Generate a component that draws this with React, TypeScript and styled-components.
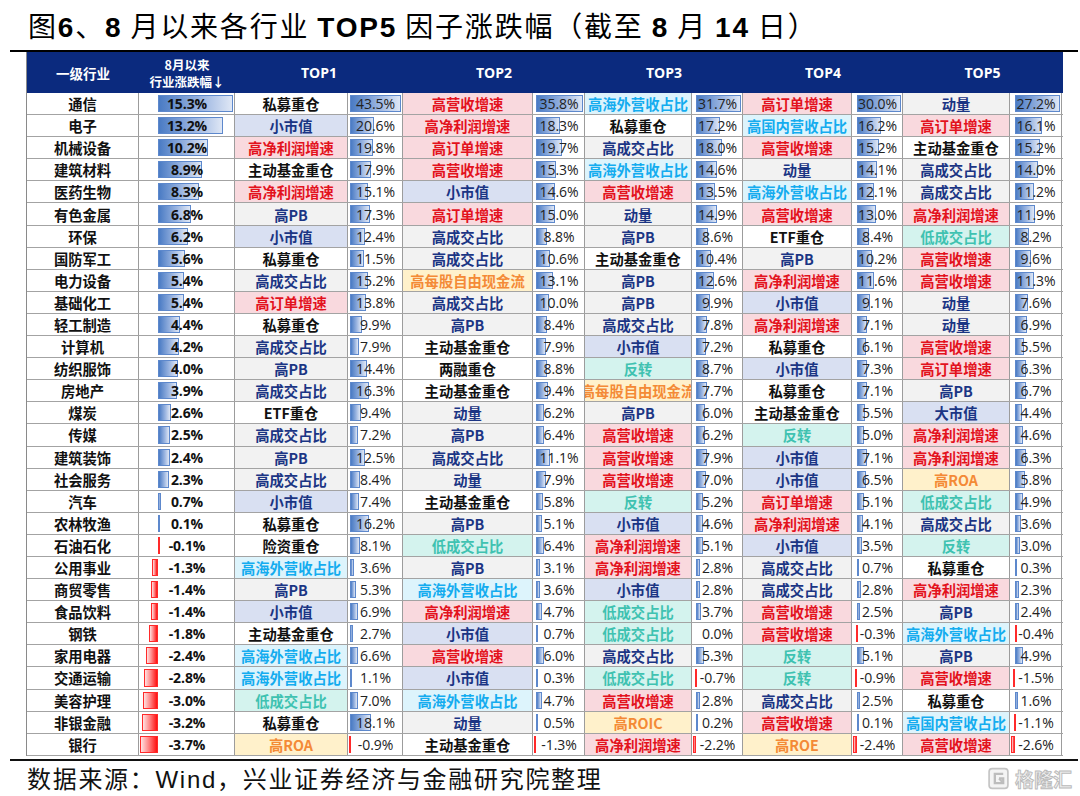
import styled, { createGlobalStyle } from "styled-components";

const GlobalStyle = createGlobalStyle`
  html, body {
    margin: 0;
    padding: 0;
    background: #ffffff;
  }
  body {
    font-family: "Noto Sans CJK SC", "Noto Sans", sans-serif;
    color: #111;
  }
`;

// column widths: industry, change, then name/value x5
const NAME_W = [113, 130, 107, 109, 107];
const VALUE_W = [55, 52, 51, 51, 52];
const COLS = `112px 96px ${NAME_W.map((n, i) => `${n}px ${VALUE_W[i]}px`).join(" ")}`;

const NUM_FONT = `"Open Sans", "Noto Sans", "Noto Sans CJK SC", sans-serif`;
const CJK_FONT = `"Noto Sans CJK SC", "Noto Sans", sans-serif`;

type Tone = "red" | "cyan" | "navy" | "lav" | "plain" | "teal" | "orange";

const TONES: Record<Tone, { fg: string; bg: string }> = {
  red: { fg: "#e3121d", bg: "#f9d9de" },
  cyan: { fg: "#14acef", bg: "#ddf4fc" },
  navy: { fg: "#1b3584", bg: "#f2f2f2" },
  lav: { fg: "#1b3584", bg: "#d9e0f2" },
  plain: { fg: "#111111", bg: "#ffffff" },
  teal: { fg: "#3fc2b1", bg: "#d4f3ee" },
  orange: { fg: "#f48a36", bg: "#fff1cb" },
};

const FACTOR_TONE: Record<string, Tone> = {
  私募重仓: "plain",
  主动基金重仓: "plain",
  ETF重仓: "plain",
  两融重仓: "plain",
  险资重仓: "plain",
  高营收增速: "red",
  高订单增速: "red",
  高净利润增速: "red",
  高海外营收占比: "cyan",
  高国内营收占比: "cyan",
  高成交占比: "navy",
  高PB: "navy",
  动量: "navy",
  小市值: "lav",
  大市值: "lav",
  低成交占比: "teal",
  反转: "teal",
  高每股自由现金流: "orange",
  高ROA: "orange",
  高ROIC: "orange",
  高ROE: "orange",
};

const RAW = `通信|15.3|私募重仓|43.5|高营收增速|35.8|高海外营收占比|31.7|高订单增速|30.0|动量|27.2
电子|13.2|小市值|20.6|高净利润增速|18.3|私募重仓|17.2|高国内营收占比|16.2|高订单增速|16.1
机械设备|10.2|高净利润增速|19.8|高订单增速|19.7|高成交占比|18.0|高营收增速|15.2|主动基金重仓|15.2
建筑材料|8.9|主动基金重仓|17.9|高营收增速|15.3|高海外营收占比|14.6|动量|14.1|高成交占比|14.0
医药生物|8.3|高净利润增速|15.1|小市值|14.6|高营收增速|13.5|高海外营收占比|12.1|高成交占比|11.2
有色金属|6.8|高PB|17.3|高订单增速|15.0|动量|14.9|高营收增速|13.0|高净利润增速|11.9
环保|6.2|小市值|12.4|高成交占比|8.8|高PB|8.6|ETF重仓|8.4|低成交占比|8.2
国防军工|5.6|私募重仓|11.5|高成交占比|10.6|主动基金重仓|10.4|高PB|10.2|高营收增速|9.6
电力设备|5.4|高成交占比|15.2|高每股自由现金流|13.1|高PB|12.6|高净利润增速|11.6|高营收增速|11.3
基础化工|5.4|高订单增速|13.8|高成交占比|10.0|高PB|9.9|小市值|9.1|动量|7.6
轻工制造|4.4|私募重仓|9.9|高PB|8.4|高成交占比|7.8|高净利润增速|7.1|动量|6.9
计算机|4.2|高成交占比|7.9|主动基金重仓|7.9|小市值|7.2|私募重仓|6.1|高营收增速|5.5
纺织服饰|4.0|高PB|14.4|两融重仓|8.8|反转|8.7|小市值|7.3|高订单增速|6.3
房地产|3.9|高成交占比|16.3|主动基金重仓|9.4|高每股自由现金流|7.7|私募重仓|7.1|高PB|6.7
煤炭|2.6|ETF重仓|9.4|动量|6.2|高PB|6.0|主动基金重仓|5.5|大市值|4.4
传媒|2.5|高成交占比|7.2|高PB|6.4|高营收增速|6.2|反转|5.0|高净利润增速|4.6
建筑装饰|2.4|高PB|12.5|高成交占比|11.1|高营收增速|7.9|小市值|7.1|高净利润增速|6.3
社会服务|2.3|高成交占比|8.4|动量|7.9|高营收增速|7.0|小市值|6.5|高ROA|5.8
汽车|0.7|小市值|7.4|主动基金重仓|5.8|反转|5.2|高订单增速|5.1|低成交占比|4.9
农林牧渔|0.1|私募重仓|16.2|高PB|5.1|小市值|4.6|高净利润增速|4.1|高成交占比|3.6
石油石化|-0.1|险资重仓|8.1|低成交占比|6.4|高净利润增速|5.1|小市值|3.5|反转|3.0
公用事业|-1.3|高海外营收占比|3.6|高PB|3.1|高净利润增速|2.8|高成交占比|0.7|私募重仓|0.3
商贸零售|-1.4|高PB|5.3|高海外营收占比|3.6|小市值|2.8|高成交占比|2.8|高净利润增速|2.3
食品饮料|-1.4|小市值|6.9|高净利润增速|4.7|低成交占比|3.7|高营收增速|2.5|高PB|2.4
钢铁|-1.8|主动基金重仓|2.7|小市值|0.7|低成交占比|0.0|高营收增速|-0.3|高海外营收占比|-0.4
家用电器|-2.4|高海外营收占比|6.6|高营收增速|6.0|高成交占比|5.3|反转|5.1|高PB|4.9
交通运输|-2.8|高海外营收占比|1.1|小市值|0.3|低成交占比|-0.7|反转|-0.9|高营收增速|-1.5
美容护理|-3.0|低成交占比|7.0|高海外营收占比|4.7|高营收增速|2.8|高成交占比|2.5|私募重仓|1.6
非银金融|-3.2|私募重仓|18.1|动量|0.5|高ROIC|0.2|高营收增速|0.1|高国内营收占比|-1.1
银行|-3.7|高ROA|-0.9|主动基金重仓|-1.3|高净利润增速|-2.2|高ROE|-2.4|高营收增速|-2.6`;

type Row = {
  industry: string;
  change: number;
  factors: { name: string; value: number }[];
};

const ROWS: Row[] = RAW.split("\n").map((line) => {
  const p = line.split("|");
  const factors = [];
  for (let i = 2; i < p.length; i += 2) {
    factors.push({ name: p[i], value: parseFloat(p[i + 1]) });
  }
  return { industry: p[0], change: parseFloat(p[1]), factors };
});

type Scale = { min: number; range: number; width: number };

const makeScale = (values: number[], cellWidth: number): Scale => {
  const min = Math.min(0, ...values);
  const max = Math.max(0, ...values);
  return { min, range: max - min, width: cellWidth - 3 };
};

const CHANGE_SCALE = makeScale(
  ROWS.map((r) => r.change),
  96
);
const VALUE_SCALES = VALUE_W.map((w, i) =>
  makeScale(
    ROWS.map((r) => r.factors[i].value),
    w
  )
);

const fmt = (v: number) => `${v.toFixed(1)}%`;

const Page = styled.div`
  width: 1068px;
  margin-left: 10px;
`;

const Title = styled.h1`
  margin: 0;
  height: 50px;
  padding-left: 18px;
  border-bottom: 2px solid #000;
  font-family: ${CJK_FONT};
  font-weight: 400;
  font-size: 28px;
  line-height: 50px;
  letter-spacing: 1.8px;
  color: #000;
  white-space: nowrap;
`;

const Latin = styled.b`
  font-family: "Liberation Sans", Arial, sans-serif;
  font-weight: 700;
`;

const Table = styled.div`
  width: 1036px;
  margin-left: 16px;
  border-left: 1px solid #8a8a8a;
`;

const HeaderRow = styled.div`
  display: grid;
  grid-template-columns: ${COLS};
  height: 41px;
  background: #0b2a7e;
  color: #ffffff;
`;

const HeaderCell = styled.div<{ $span?: number }>`
  grid-column: span ${({ $span }) => $span ?? 1};
  display: flex;
  align-items: center;
  justify-content: center;
  text-align: center;
  font-family: ${NUM_FONT};
  font-weight: 700;
  font-size: 14px;
`;

const HeaderCjk = styled.span<{ $small?: boolean }>`
  font-family: ${CJK_FONT};
  font-weight: 700;
  font-size: ${({ $small }) => ($small ? "12.5px" : "13.5px")};
  line-height: ${({ $small }) => ($small ? "17px" : "20px")};
`;

const BodyRow = styled.div`
  display: grid;
  grid-template-columns: ${COLS};
  height: 22.1px;
  box-sizing: border-box;
  border-bottom: 1px solid #a3a3a3;
`;

const Cell = styled.div`
  box-sizing: border-box;
  border-right: 1px solid #9c9c9c;
  min-width: 0;
  overflow: hidden;
`;

const IndustryCell = styled(Cell)`
  display: flex;
  align-items: center;
  justify-content: center;
  font-family: ${CJK_FONT};
  font-weight: 700;
  font-size: 14.3px;
  color: #111;
`;

const FactorCell = styled(Cell)<{ $tone: Tone }>`
  display: flex;
  align-items: center;
  justify-content: center;
  white-space: nowrap;
  background: ${({ $tone }) => TONES[$tone].bg};
  color: ${({ $tone }) => TONES[$tone].fg};
  font-family: ${CJK_FONT};
  font-weight: 700;
  font-size: 14.3px;
`;

const BarCell = styled(Cell)`
  display: grid;
  grid-template-rows: 100%;
  grid-template-columns: 100%;
  padding-left: 1px;
`;

const Bar = styled.div<{ $neg: boolean }>`
  grid-row: 1;
  grid-column: 1;
  justify-self: start;
  box-sizing: border-box;
  margin-top: 2px;
  margin-bottom: 2px;
  border: 1px solid ${({ $neg }) => ($neg ? "#ff2a2a" : "#5d88cc")};
  background: ${({ $neg }) =>
    $neg
      ? "linear-gradient(to left, #ff1010 0%, #ff8a8a 55%, #ffe2e2 100%)"
      : "linear-gradient(to right, #4a7bc4 0%, #98b3e0 55%, #dfe7f5 100%)"};
`;

const BarText = styled.div<{ $bold?: boolean }>`
  grid-row: 1;
  grid-column: 1;
  display: flex;
  align-items: center;
  justify-content: center;
  font-family: ${NUM_FONT};
  font-weight: ${({ $bold }) => ($bold ? 700 : 400)};
  font-size: 14px;
  color: ${({ $bold }) => ($bold ? "#111" : "#222")};
  letter-spacing: -0.1px;
`;

const FooterRule = styled.div`
  margin-top: 3px;
  border-top: 2.5px solid #111;
`;

const Footer = styled.div`
  display: flex;
  align-items: center;
  justify-content: space-between;
  height: 33px;
  padding: 0 6px 0 17px;
`;

const Source = styled.div`
  font-family: ${CJK_FONT};
  font-size: 24px;
  letter-spacing: 1.7px;
  color: #111;
  white-space: nowrap;
`;

const SourceLatin = styled.span`
  font-family: "Liberation Sans", Arial, sans-serif;
`;

const Watermark = styled.div`
  display: flex;
  align-items: center;
  gap: 6px;
  margin-top: 2px;
`;

const WatermarkText = styled.span`
  font-family: ${CJK_FONT};
  font-weight: 700;
  font-size: 19px;
  color: #f0f0f0;
  -webkit-text-stroke: 0.9px #bababa;
`;

const DataBar = ({ value, scale }: { value: number; scale: Scale }) => {
  if (value === 0 || scale.range === 0) return null;
  const axis = (-scale.min / scale.range) * scale.width;
  const len = (Math.abs(value) / scale.range) * scale.width;
  const left = value > 0 ? axis : axis - len;
  return (
    <Bar
      $neg={value < 0}
      style={{ marginLeft: `${left.toFixed(1)}px`, width: `${Math.max(len, 1.5).toFixed(1)}px` }}
    />
  );
};

const LogoMark = () => (
  <svg width="21" height="23" viewBox="0 0 20 22" fill="none">
    <rect
      x="1"
      y="1.5"
      width="18"
      height="19"
      rx="3"
      stroke="#c4c4c4"
      strokeWidth="1.6"
      fill="#f4f4f4"
    />
    <path
      d="M14.5 6.5H6.5V15.5H14.5V11H10.5"
      stroke="#bdbdbd"
      strokeWidth="2.2"
      fill="none"
    />
    <path d="M10.5 11L14.5 15.5" stroke="#bdbdbd" strokeWidth="1.8" />
  </svg>
);

export default function App() {
  return (
    <>
      <GlobalStyle />
      <Page>
        <Title>
          图<Latin>6</Latin>、<Latin>8</Latin> 月以来各行业 <Latin>TOP5</Latin>{" "}
          因子涨跌幅（截至 <Latin>8</Latin> 月 <Latin>14</Latin> 日）
        </Title>
        <Table>
          <HeaderRow>
            <HeaderCell>
              <HeaderCjk>一级行业</HeaderCjk>
            </HeaderCell>
            <HeaderCell>
              <HeaderCjk $small>
                8月以来
                <br />
                行业涨跌幅↓
              </HeaderCjk>
            </HeaderCell>
            {[1, 2, 3, 4, 5].map((n) => (
              <HeaderCell key={n} $span={2}>
                TOP{n}
              </HeaderCell>
            ))}
          </HeaderRow>
          {ROWS.map((row) => (
            <BodyRow key={row.industry}>
              <IndustryCell>{row.industry}</IndustryCell>
              <BarCell>
                <DataBar value={row.change} scale={CHANGE_SCALE} />
                <BarText $bold>{fmt(row.change)}</BarText>
              </BarCell>
              {row.factors.map((f, i) => [
                <FactorCell key={`n${i}`} $tone={FACTOR_TONE[f.name] ?? "plain"}>
                  {f.name}
                </FactorCell>,
                <BarCell key={`v${i}`}>
                  <DataBar value={f.value} scale={VALUE_SCALES[i]} />
                  <BarText>{fmt(f.value)}</BarText>
                </BarCell>,
              ])}
            </BodyRow>
          ))}
        </Table>
        <FooterRule />
        <Footer>
          <Source>
            数据来源：<SourceLatin>Wind</SourceLatin>，兴业证券经济与金融研究院整理
          </Source>
          <Watermark>
            <LogoMark />
            <WatermarkText>格隆汇</WatermarkText>
          </Watermark>
        </Footer>
      </Page>
    </>
  );
}
